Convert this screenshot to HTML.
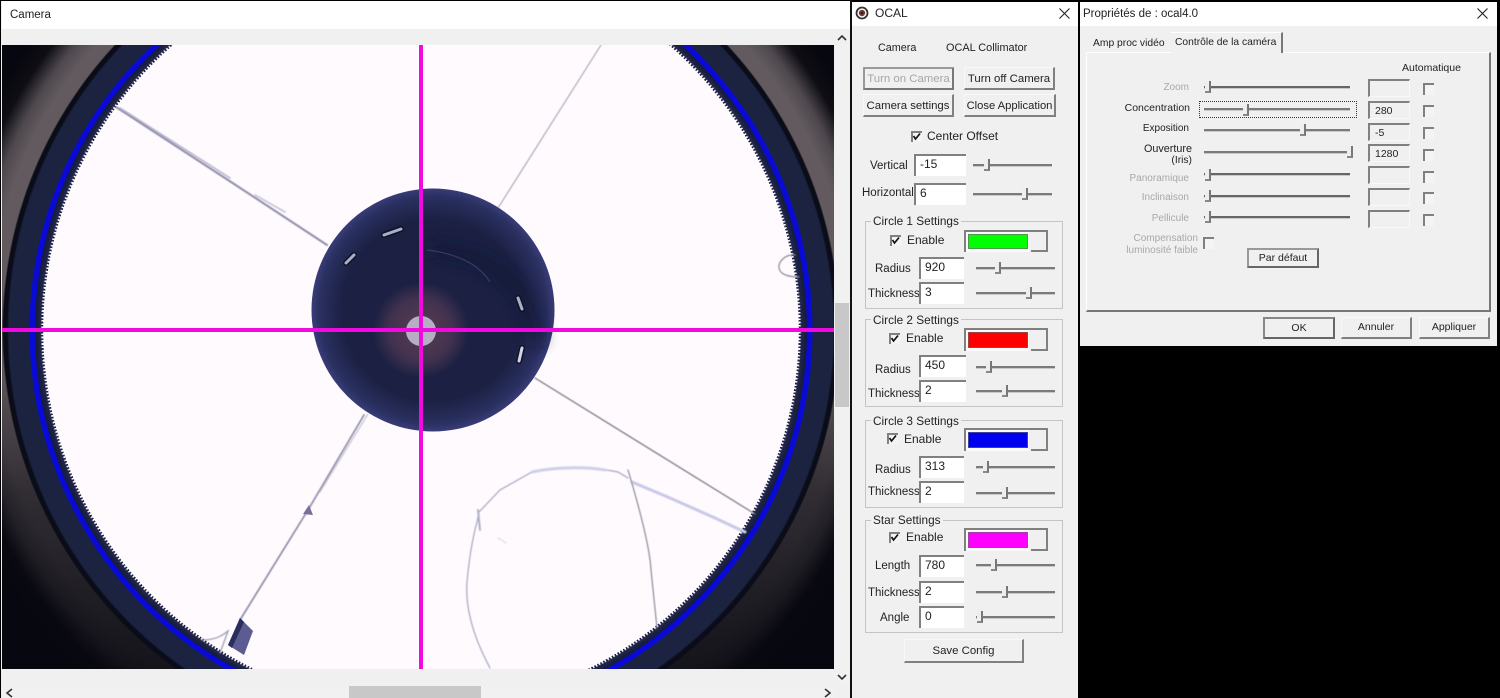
<!DOCTYPE html>
<html><head><meta charset="utf-8"><title>OCAL</title>
<style>
html,body{margin:0;padding:0;background:#000;overflow:hidden;width:1500px;height:698px;}
#r{position:absolute;left:0;top:0;width:1500px;height:698px;overflow:hidden;font-family:"Liberation Sans",sans-serif;font-size:11.5px;color:#222;}
#r div,#r span{position:absolute;box-sizing:border-box;}
#r svg{display:block;}
#r span{white-space:nowrap;line-height:14px;}
.p span{font-size:10.3px;}
#r .p span.d{color:#a8a8a8;font-size:10px;}
.e{font-size:12px;}
.b{background:#f0f0f0;border:1px solid #f8f8f8;border-right:2px solid #808080;border-bottom:2px solid #808080;text-align:center;line-height:23px;white-space:nowrap;font-size:11.4px;}
.bd{border:2px solid #777;border-top-color:#999;border-left-color:#999;line-height:21px;}
.f{background:#fff;border-top:2px solid #808080;border-left:2px solid #808080;padding-left:4px;line-height:16px;font-size:12px;}
.fp{background:#f0f0f0;border-top:2px solid #808080;border-left:2px solid #808080;padding-left:5px;line-height:17px;font-size:10.5px;border-right:1px solid #f8f8f8;border-bottom:1px solid #f8f8f8;}
.c{width:11px;height:11px;background:#f4f4f4;border-top:2px solid #808080;border-left:2px solid #808080;}
.s{height:3px;background:#7a7a7a;border-bottom:1px solid #c8c8c8;}
.t{width:6px;height:12px;background:#eee;border-right:2px solid #777;border-bottom:2px solid #888;}
.g{border:1px solid #c4c4c4;background:#f0f0f0;}
.l{background:#f0f0f0;padding:0 2px;font-size:11.8px;}
.cb{background:#f0f0f0;border-top:2px solid #808080;border-left:2px solid #808080;border-right:2px solid #808080;}
.cu{background:#808080;height:2px;width:17px;left:1031px;}
.cw{background:#fafafa;width:63px;left:966px;}
</style></head><body>
<div id="r">

<!-- Camera window -->
<div style="left:1px;top:1px;width:849px;height:697px;background:#f0f0f0"></div>
<div style="left:2px;top:1px;width:848px;height:28px;background:#fff"></div>
<span style="left:10px;top:8px;font-size:11.5px">Camera</span>
<!-- lens rings as gradients -->
<div style="left:2px;top:45px;width:832px;height:624px;background:#07070f"></div>
<div style="left:2px;top:45px;width:832px;height:624px;background:radial-gradient(circle at 419px 285px,#625a5e 416px,#625a5e 432px,#4e484e 448px,rgba(20,18,24,.6) 466px,rgba(7,7,15,0) 485px)"></div>
<div style="left:2px;top:45px;width:832px;height:624px;background:linear-gradient(180deg,rgba(7,7,15,0) 50%,rgba(7,7,15,.55) 72%,rgba(7,7,15,.85) 100%)"></div>
<div style="left:2px;top:45px;width:832px;height:624px;background:radial-gradient(circle at 419px 285px,#fefafe 379px,#20264a 380.5px,#161b38 385.5px,#0a0ad8 386.5px,#0a0ad8 391px,#1b2340 392px,#1b2340 412px,#0a0c18 414px,#0a0c18 417.5px,rgba(10,12,24,0) 419px)"></div>
<div style="left:2px;top:45px;width:832px;height:624px;background:repeating-conic-gradient(from 0deg at 419px 285px,#20264a 0 .25deg,rgba(0,0,0,0) .25deg .5deg);-webkit-mask-image:radial-gradient(circle at 419px 285px,rgba(0,0,0,0) 377.5px,#000 378px,#000 381px,rgba(0,0,0,0) 381.5px);mask-image:radial-gradient(circle at 419px 285px,rgba(0,0,0,0) 377.5px,#000 378px,#000 381px,rgba(0,0,0,0) 381.5px)"></div>
<svg style="position:absolute;left:2px;top:45px" width="832" height="624" viewBox="2 45 832 624">
<defs>
<filter id="b2" x="-30%" y="-30%" width="160%" height="160%"><feGaussianBlur stdDeviation="7"/></filter>
<filter id="b3"><feGaussianBlur stdDeviation="0.5"/></filter>
<radialGradient id="sp" gradientUnits="userSpaceOnUse" cx="433" cy="310" r="122">
<stop offset="0" stop-color="#1c2042"/><stop offset=".75" stop-color="#1c2144"/><stop offset=".93" stop-color="#2a3060"/><stop offset="1" stop-color="#3a3d7a"/></radialGradient>
<radialGradient id="pk"><stop offset="0" stop-color="#5a3c52"/><stop offset=".65" stop-color="#42324f"/><stop offset="1" stop-color="#42324f" stop-opacity="0"/></radialGradient>
</defs>
<!-- spider vanes -->
<g fill="none" stroke-linecap="round" filter="url(#b3)">
<path d="M116 107L228 180L327 245" stroke="#8f8cab" stroke-width="2"/>
<path d="M120 108L230 178" stroke="#b6b4cc" stroke-width="1.6"/>
<path d="M255 195L285 212" stroke="#c6c4da" stroke-width="1.6"/>
<path d="M601 45L498 208" stroke="#a8a3b4" stroke-width="1.1"/>
<path d="M535 378L755 514" stroke="#7a7584" stroke-width="1.2"/>
<path d="M364 415L308 510L240 620" stroke="#8f8ca6" stroke-width="1.7"/>
<path d="M368 414L320 492" stroke="#c8c6d6" stroke-width="1.2"/>
<path d="M202 640C215 640 222 636 228 631L220 653" stroke="#9a97b0" stroke-width="1.2"/>
<!-- wires -->
<path d="M490 668C475 640 465 610 467 582C469 560 472 540 477 522L479 512L500 490L530 473C550 468 590 466 618 472L628 478" stroke="#a6a6c2" stroke-width="1.2"/>
<path d="M478 510L480 530" stroke="#b0b0cc" stroke-width="2"/>
<path d="M532 472C550 468 580 466 605 470" stroke="#cfd0ea" stroke-width="3"/>
<path d="M632 482L670 498L715 518L745 532" stroke="#c9c9e8" stroke-width="3"/>
<path d="M628 470C640 510 650 550 651 570L657 628" stroke="#8e8b9a" stroke-width="1.2"/>
<path d="M498 538L506 543" stroke="#ddd" stroke-width="1.2"/>
<path d="M795 255C785 254 778 262 779 268C780 275 790 277 799 277" stroke="#8e8b9a" stroke-width="1.2"/>
</g>
<path d="M309 505L313 515L303 514Z" fill="#76709a"/>
<path d="M240 618L253 631L244 655L228 645Z" fill="#5c5c92"/>
<path d="M240 618L244 622L232 648L228 645Z" fill="#2a2e5c"/>
<!-- secondary mirror -->
<circle cx="433" cy="310" r="121.5" fill="url(#sp)"/>
<path d="M430 249C490 250 535 290 538 345" fill="none" stroke="#0e1230" stroke-width="16" opacity=".6" filter="url(#b2)"/>
<path d="M427 250C460 254 480 266 490 282" fill="none" stroke="#4a5080" stroke-width="1.2" opacity=".6"/>
<circle cx="421" cy="330" r="48" fill="url(#pk)"/>
<circle cx="421" cy="331" r="15" fill="#b5aec4"/>
<g fill="none" stroke-linecap="round">
<path d="M384 235L401 229" stroke="#0f1228" stroke-width="6"/><path d="M384 235L401 229" stroke="#aab0c8" stroke-width="3"/>
<path d="M346 263L354 255" stroke="#0f1228" stroke-width="6"/><path d="M346 263L354 255" stroke="#aab0c8" stroke-width="3"/>
<path d="M518 298L522 309" stroke="#0f1228" stroke-width="6"/><path d="M518 298L522 309" stroke="#aab0c8" stroke-width="3"/>
<path d="M522 348L519 361" stroke="#0f1228" stroke-width="6"/><path d="M522 348L519 361" stroke="#d0d4e4" stroke-width="3"/>
</g>
<rect x="419" y="45" width="4" height="624" fill="#f00ae0"/>
<rect x="2" y="328" width="832" height="4" fill="#f00ae0"/>
</svg>
<!-- scrollbars -->
<div style="left:2px;top:686px;width:833px;height:12px;background:#f1f1f1"></div>
<div style="left:349px;top:686px;width:132px;height:12px;background:#c8c8c8"></div>
<div style="left:835px;top:45px;width:14px;height:640px;background:#f1f1f1"></div>
<div style="left:835px;top:303px;width:14px;height:104px;background:#c8c8c8"></div>
<svg style="position:absolute;left:0;top:0" width="851" height="698" fill="none" stroke="#333" stroke-width="1.6">
<path d="M12 689L7 693L12 697M825 689L830 693L825 697M838 675L842 679L846 675M838 40L842 36L846 40"/>
</svg>
<div style="left:850px;top:0;width:2px;height:698px;background:#111"></div>

<!-- OCAL window -->
<div style="left:852px;top:2px;width:226px;height:696px;background:#f0f0f0"></div>
<div style="left:852px;top:2px;width:226px;height:24px;background:#fff"></div>
<svg style="position:absolute;left:855px;top:6px" width="14" height="14"><circle cx="7" cy="7" r="5.5" fill="none" stroke="#333" stroke-width="1.8"/><circle cx="7" cy="7" r="3.2" fill="#7a3a30"/><circle cx="7" cy="7" r="1.3" fill="#222"/></svg>
<span class="e" style="left:875px;top:6px;">OCAL</span>
<svg style="position:absolute;left:1059px;top:8px" width="11" height="11"><path d="M.5.5L10.5 10.5M10.5.5L.5 10.5" stroke="#222" stroke-width="1.1"/></svg>
<span style="left:878px;top:41px;font-size:10.8px">Camera</span>
<span style="left:946px;top:41px;font-size:10.9px">OCAL Collimator</span>
<div class="b bd" style="left:863px;top:67px;width:91px;height:23px;color:#a6a6a6">Turn on Camera</div>
<div class="b" style="left:964px;top:67px;width:91px;height:23px">Turn off Camera</div>
<div class="b" style="left:863px;top:94px;width:91px;height:23px">Camera settings</div>
<div class="b" style="left:964px;top:94px;width:92px;height:23px;font-size:11.2px">Close Application</div>
<div class="c" style="left:911px;top:131px"></div><svg style="position:absolute;left:911px;top:131px" width="11" height="11"><path d="M2.5 5L4.5 8L9 2.5" fill="none" stroke="#111" stroke-width="1.7"/></svg>
<span class="e" style="left:927px;top:129px">Center Offset</span>
<span style="left:870px;top:159px">Vertical</span>
<div class="f" style="left:914px;top:154px;width:52px;height:22px">-15</div>
<div class="s" style="left:973px;top:164px;width:79px"></div><div class="t" style="left:984px;top:159px"></div>
<span style="left:862px;top:186px">Horizontal</span>
<div class="f" style="left:914px;top:183px;width:52px;height:22px">6</div>
<div class="s" style="left:973px;top:193px;width:79px"></div><div class="t" style="left:1022px;top:188px"></div>

<!-- Circle 1 -->
<div class="g" style="left:865px;top:221px;width:198px;height:88px"></div><span class="l" style="left:871px;top:214px">Circle 1 Settings</span>
<div class="c" style="left:890px;top:235px"></div><svg style="position:absolute;left:890px;top:235px" width="11" height="11"><path d="M2.5 5L4.5 8L9 2.5" fill="none" stroke="#111" stroke-width="1.7"/></svg>
<span class="e" style="left:907px;top:233px">Enable</span>
<div class="cb" style="left:964px;top:230px;width:84px;height:22px"></div><div class="cu" style="top:250px"></div><div class="cw" style="top:232px;height:20px"></div><div style="left:968px;top:234px;width:60px;height:15px;background:#00ff00;border:1px solid #4a9a4a"></div>
<span style="left:875px;top:262px">Radius</span>
<div class="f" style="left:919px;top:257px;width:45px;height:22px">920</div>
<div class="s" style="left:976px;top:267px;width:79px"></div><div class="t" style="left:995px;top:262px"></div>
<span style="left:868px;top:287px">Thickness</span>
<div class="f" style="left:919px;top:282px;width:45px;height:22px">3</div>
<div class="s" style="left:976px;top:292px;width:79px"></div><div class="t" style="left:1026px;top:287px"></div>

<!-- Circle 2 -->
<div class="g" style="left:865px;top:319px;width:198px;height:88px"></div><span class="l" style="left:871px;top:313px">Circle 2 Settings</span>
<div class="c" style="left:889px;top:333px"></div><svg style="position:absolute;left:889px;top:333px" width="11" height="11"><path d="M2.5 5L4.5 8L9 2.5" fill="none" stroke="#111" stroke-width="1.7"/></svg>
<span class="e" style="left:906px;top:331px">Enable</span>
<div class="cb" style="left:964px;top:328px;width:84px;height:23px"></div><div class="cu" style="top:349px"></div><div class="cw" style="top:330px;height:21px"></div><div style="left:968px;top:332px;width:60px;height:16px;background:#ff0000;border:1px solid #a04040"></div>
<span style="left:875px;top:363px">Radius</span>
<div class="f" style="left:919px;top:355px;width:47px;height:22px">450</div>
<div class="s" style="left:976px;top:366px;width:79px"></div><div class="t" style="left:986px;top:361px"></div>
<span style="left:868px;top:387px">Thickness</span>
<div class="f" style="left:919px;top:380px;width:47px;height:22px">2</div>
<div class="s" style="left:976px;top:390px;width:79px"></div><div class="t" style="left:1002px;top:385px"></div>

<!-- Circle 3 -->
<div class="g" style="left:865px;top:420px;width:198px;height:88px"></div><span class="l" style="left:871px;top:414px">Circle 3 Settings</span>
<div class="c" style="left:887px;top:433px"></div><svg style="position:absolute;left:887px;top:433px" width="11" height="11"><path d="M2.5 5L4.5 8L9 2.5" fill="none" stroke="#111" stroke-width="1.7"/></svg>
<span class="e" style="left:904px;top:432px">Enable</span>
<div class="cb" style="left:964px;top:428px;width:84px;height:23px"></div><div class="cu" style="top:449px"></div><div class="cw" style="top:430px;height:21px"></div><div style="left:968px;top:432px;width:60px;height:16px;background:#0000ee;border:1px solid #4040a0"></div>
<span style="left:875px;top:463px">Radius</span>
<div class="f" style="left:919px;top:456px;width:45px;height:22px">313</div>
<div class="s" style="left:976px;top:466px;width:79px"></div><div class="t" style="left:983px;top:461px"></div>
<span style="left:868px;top:485px">Thickness</span>
<div class="f" style="left:919px;top:481px;width:45px;height:22px">2</div>
<div class="s" style="left:976px;top:492px;width:79px"></div><div class="t" style="left:1002px;top:487px"></div>

<!-- Star -->
<div class="g" style="left:865px;top:520px;width:198px;height:113px"></div><span class="l" style="left:871px;top:513px">Star Settings</span>
<div class="c" style="left:889px;top:532px"></div><svg style="position:absolute;left:889px;top:532px" width="11" height="11"><path d="M2.5 5L4.5 8L9 2.5" fill="none" stroke="#111" stroke-width="1.7"/></svg>
<span class="e" style="left:906px;top:530px">Enable</span>
<div class="cb" style="left:964px;top:528px;width:84px;height:23px"></div><div class="cu" style="top:549px"></div><div class="cw" style="top:530px;height:21px"></div><div style="left:968px;top:532px;width:60px;height:16px;background:#ff00ff;border:1px solid #a040a0"></div>
<span style="left:875px;top:559px">Length</span>
<div class="f" style="left:919px;top:555px;width:45px;height:22px">780</div>
<div class="s" style="left:976px;top:564px;width:79px"></div><div class="t" style="left:991px;top:559px"></div>
<span style="left:868px;top:586px">Thickness</span>
<div class="f" style="left:919px;top:581px;width:45px;height:22px">2</div>
<div class="s" style="left:976px;top:591px;width:79px"></div><div class="t" style="left:1002px;top:586px"></div>
<span style="left:880px;top:611px">Angle</span>
<div class="f" style="left:919px;top:606px;width:45px;height:22px">0</div>
<div class="s" style="left:976px;top:616px;width:79px"></div><div class="t" style="left:977px;top:611px"></div>
<div class="b" style="left:904px;top:639px;width:120px;height:24px;line-height:22px">Save Config</div>

<!-- Properties window -->
<div class="p" style="left:1080px;top:2px;width:417px;height:344px;background:#f0f0f0">
<div style="left:0;top:0;width:417px;height:24px;background:#fff"></div>
<span style="left:3px;top:5px;font-size:11.5px">Propriétés de : ocal4.0</span>
<svg style="position:absolute;left:397px;top:6px" width="11" height="11"><path d="M.5.5L10.5 10.5M10.5.5L.5 10.5" stroke="#222" stroke-width="1.1"/></svg>
<!-- tab panel -->
<div style="left:6px;top:50px;width:405px;height:260px;border-top:1px solid #fff;border-left:1px solid #fff;border-right:2px solid #777;border-bottom:2px solid #777"></div>
<span style="left:13px;top:35px">Amp proc vidéo</span>
<div style="left:91px;top:30px;width:112px;height:21px;background:#f0f0f0;border-right:2px solid #777;border-top:1px solid #fff"></div>
<span style="left:95px;top:34px">Contrôle de la caméra</span>
<span style="left:322px;top:59px;font-size:10.5px">Automatique</span>

<span class="d" style="right:308px;top:79px">Zoom</span>
<div class="s" style="left:124px;top:84px;width:146px;background:#666"></div><div class="t" style="left:125px;top:79px"></div>
<div class="fp" style="left:288px;top:77px;width:42px;height:18px"></div><div class="c" style="left:343px;top:81px;height:12px"></div>

<span style="right:307px;top:99px;font-size:10.5px">Concentration</span>
<div style="left:119px;top:99px;width:158px;height:17px;border:1px dotted #333"></div>
<div class="s" style="left:124px;top:106px;width:146px"></div><div class="t" style="left:163px;top:102px"></div>
<div class="fp" style="left:288px;top:99px;width:42px;height:18px">280</div><div class="c" style="left:343px;top:103px;height:12px"></div>

<span style="right:308px;top:120px;font-size:10px">Exposition</span>
<div class="s" style="left:124px;top:127px;width:146px"></div><div class="t" style="left:220px;top:122px"></div>
<div class="fp" style="left:288px;top:121px;width:42px;height:18px">-5</div><div class="c" style="left:343px;top:125px;height:12px"></div>

<span style="right:305px;top:140px;font-size:10.8px">Ouverture</span>
<span style="right:305px;top:152px">(Iris)</span>
<div class="s" style="left:124px;top:149px;width:146px"></div><div class="t" style="left:267px;top:144px"></div>
<div class="fp" style="left:288px;top:142px;width:42px;height:18px">1280</div><div class="c" style="left:343px;top:147px;height:12px"></div>

<span class="d" style="right:308px;top:170px">Panoramique</span>
<div class="s" style="left:124px;top:171px;width:146px;background:#666"></div><div class="t" style="left:125px;top:167px"></div>
<div class="fp" style="left:288px;top:164px;width:42px;height:18px"></div><div class="c" style="left:343px;top:169px;height:12px"></div>

<span class="d" style="right:308px;top:189px">Inclinaison</span>
<div class="s" style="left:124px;top:193px;width:146px;background:#666"></div><div class="t" style="left:125px;top:188px"></div>
<div class="fp" style="left:288px;top:186px;width:42px;height:18px"></div><div class="c" style="left:343px;top:190px;height:12px"></div>

<span class="d" style="right:308px;top:210px">Pellicule</span>
<div class="s" style="left:124px;top:214px;width:146px;background:#666"></div><div class="t" style="left:125px;top:209px"></div>
<div class="fp" style="left:288px;top:208px;width:42px;height:18px"></div><div class="c" style="left:343px;top:212px;height:12px"></div>

<span class="d" style="right:299px;top:230px">Compensation</span>
<span class="d" style="right:299px;top:242px">luminosité faible</span>
<div class="c" style="left:123px;top:235px;height:12px"></div>

<div class="b bd" style="left:167px;top:246px;width:72px;height:20px;line-height:16px;font-size:10.5px;border-color:#999 #666 #666 #999">Par défaut</div>
<div class="b bd" style="left:183px;top:315px;width:72px;height:22px;line-height:18px;font-size:10.5px;border-color:#888 #666 #666 #888">OK</div>
<div class="b" style="left:261px;top:315px;width:71px;height:22px;line-height:19px;font-size:10.5px">Annuler</div>
<div class="b" style="left:339px;top:315px;width:71px;height:22px;line-height:19px;font-size:10.5px">Appliquer</div>
</div>
</div>
</body></html>
